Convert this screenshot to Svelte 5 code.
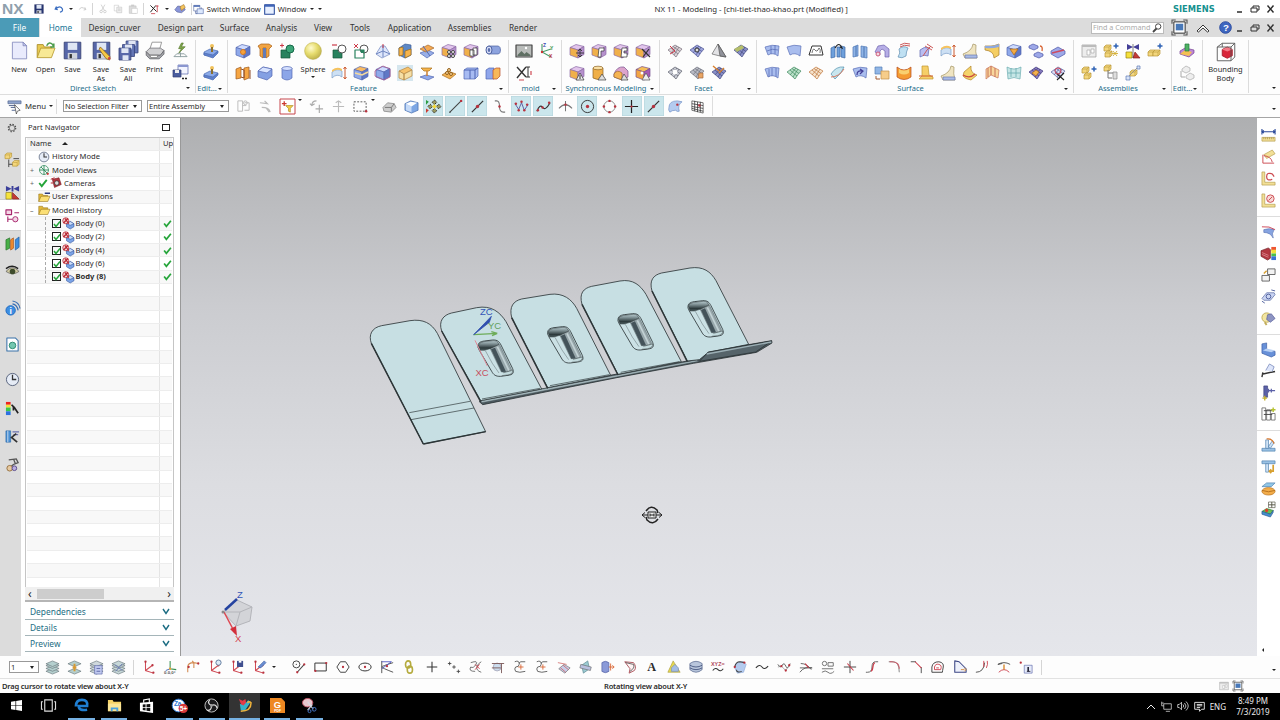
<script lang="ts">
	// small drawing helpers, every icon lives on a 16x16 grid
	const l = (d: string, c = '#444', w = 1) =>
		`<path d="${d}" fill="none" stroke="${c}" stroke-width="${w}"/>`;
	const f = (d: string, c: string, s = 'none', w = 0.7) =>
		`<path d="${d}" fill="${c}" stroke="${s}" stroke-width="${w}" stroke-linejoin="round"/>`;
	const dot = (x: number, y: number, c = '#b8323e', r = 1.3) =>
		`<circle cx="${x}" cy="${y}" r="${r}" fill="${c}"/>`;
	const ring = (x: number, y: number, r: number, c = '#444', fill = 'none') =>
		`<circle cx="${x}" cy="${y}" r="${r}" fill="${fill}" stroke="${c}"/>`;
	const cube = (t: string, a: string, b: string, s: string) =>
		f('M1 4.5l6-3 8 2-6 3.500z', t, s) + f('M1 4.500l8 2.500v8l-8-3z', a, s) + f('M15 3.500l-6 3.500v8l6-3.500z', b, s);
	const blueCube = cube('#cfdcff', '#8fa9ea', '#6078c6', '#5266b0');
	const purpleCube = cube('#e2c5ec', '#f0b04a', '#b590cc', '#8d6ba6');
	const sheet = (a: string, s: string) => f('M1 4q7-3 14-1l-1 10q-5-4-10-1z', a, s);
	const blueSheet = sheet('#a9bdee', '#5c70b8');
	const mesh = (a: string, s: string) =>
		f('M1 7l7-5 7 4q-3 3-6 8-4-4-8-7z', a, s) + l('M4 5l7 6M6 3.500l7 5M4 10l6-7M7 12l5-8', s, 0.7);
	const plus = (x: number, y: number, c = '#2e62b5') => l(`M${x - 2.5} ${y}h5M${x} ${y - 2.500}v5`, c, 1.5);
	const gold = (x: number, y: number) =>
		f(`M${x} ${y + 1}l2-2h5v4l-2 2h-5z`, '#f3d67c', '#b99738') + l(`M${x} ${y + 1}h5l2-2M${x + 5} ${y + 1}v4`, '#b99738', 0.6);
	const floppy = (c = '#5666a8') =>
		f('M1 1h14v14H1z', c, '#353f70') + f('M4 1.500h8v6H4z', '#dfe6f4') + f('M4 10h8v5H4z', '#cfd3dc') + f('M5.500 11h2v3.500h-2z', '#333');
	const axes = l('M4 2v10l9 3M4 12l8-6', '#d04c56', 1.2) + dot(4, 2) + dot(12, 6) + dot(13, 14.500);
	const ruler = f('M1 10h14v4H1z', '#f2df96', '#b39a4a') + l('M3 10v2M5 10v2M7 10v2M9 10v2M11 10v2M13 10v2', '#8e7730', 0.6);
	const layers = (c: string) =>
		f('M1 12l7-3 7 3-7 3z', c, '#69777c') + f('M1 9l7-3 7 3-7 3z', c, '#69777c') + f('M1 6l7-3 7 3-7 3z', c, '#69777c') + f('M1 4l7-3 7 3-7 3z', c, '#69777c');
	const txt = (s: string, x: number, y: number, c: string, z: number, extra = '') =>
		`<text x="${x}" y="${y}" fill="${c}" font-size="${z}" font-family="Liberation Sans, sans-serif" font-weight="bold" ${extra}>${s}</text>`;

	const art: Record<string, string> = {
		save: floppy('#26346f'),
		undo: l('M4 4L2 8l4 1M2.500 8q8-7 11 0 1 4-4 5', '#3a6dc0', 2),
		redo: l('M12 4l2 4-4 1M13.500 8q-8-7-11 0', '#c6c6c6', 1.5),
		cut: l('M5 1l5 9M11 1L6 10', '#bbb') + ring(5, 12, 2, '#bbb') + ring(11, 12, 2, '#bbb'),
		copy: f('M2 2h7v9H2z', '#fff', '#b5b5b5') + f('M6 5h8v9H6zM8 8h4M8 10h4', '#eee', '#b5b5b5'),
		paste: f('M2 3h11v12H2z', '#ddd', '#b5b5b5') + f('M6 7h9v8H6z', '#fff', '#bbb') + f('M5 1h5v3H5z', '#ccc'),
		repeat: l('M2 2l9 9M10 2L2 12', '#222', 1.4) + l('M12 2v10M10 3h4M3 14h6', '#c9414d', 1.2),
		command: f('M1 9l4-5 8 1 2 4-5 4-6-1z', '#8995d9', '#4b568e') + f('M8 5l5-3 2 4-5 4z', '#f4c45b', '#9a6a24'),
		switch: f('M1 2h9v8H1z', '#fff', '#334c93') + f('M1 2h9v2H1z', '#3a5daa') + f('M6 7h9v7H6z', '#dce8fd', '#334c93') + l('M4 10v4h2M12 5v2', '#334c93'),
		window: f('M1 1h14v14H1z', '#e8f0ff', '#26479a', 1.5) + f('M1 1h14v3H1z', '#3f65b8'),
		new: f('M2 1h9l3 3v11H2z', '#e9ebfc', '#8187bb') + f('M11 1v3h3z', '#c6caee', '#8187bb'),
		open: f('M1 14V3h5l1 2h6v3', '#e8c951', '#a78a25') + f('M1 14l3-8h12l-3 8z', '#f8e995', '#b59930') + l('M9 4q2-4 5-1l1 2M12 5h3V2', '#4c9c4d', 1.3),
		floppy: floppy(),
		saveas: floppy() + f('M6 7l1-2 8 8v3l-3-1z', '#f5c744', '#8f6420') + dot(14.500, 14.500, '#cc3c40', 1),
		saveall: f('M6 0h10v10H6z', '#6577b6', '#35427a') + f('M8 0h6v4H8z', '#e0e6f4') + f('M3 3h10v10H3z', '#6577b6', '#35427a') + f('M5 3h6v4H5z', '#e0e6f4') + f('M0 6h10v10H0z', '#5968a9', '#35427a') + f('M2 6h6v4H2zM3 12h5v4H3z', '#e0e6f4'),
		print: f('M4 7l2-6h8l-2 7z', '#fff', '#888') + f('M1 9l3-3h9l3 2-3 4H4z', '#d0d0d2', '#77777c') + f('M1 9v3l3 3h8l4-4V8l-3 4H4z', '#a4a5aa', '#66676c') + f('M4 12h7l-1 2H5z', '#fff', '#777'),
		sketch: f('M9 0L6 6h3L6 11l7-7H9l2-4z', '#7fa84a', '#55772d') + l('M1 14.500l3-3h8l3 3zM8 10v5', '#8d9ea0'),
		dialog: f('M5 1h10v9H5z', '#f3f5ff', '#5363a9') + f('M5 1h10v2H5z', '#8b97d0') + f('M0 6h8v7H0z', '#4a5d9e', '#303d72') + f('M2 6h4v3H2z', '#eee') + l('M9 14.500h2M12 14.500h2', '#222', 1.5),
		feat: f('M1 9l6-3 8 2-5 5-9-1z', '#8baae8', '#4b6cb2') + f('M1 10v2l9 3 5-5V8l-5 4z', '#5f80cc', '#4b6cb2') + dot(9, 3, '#f0c15b', 2) + l('M9 4v5', '#8c7030', 2),
		datum: blueCube + ring(8, 9, 2.500, '#d87a1e', '#f6a33d'),
		hole: f('M1 3l3-2h8l3 2-3 3v7l-3 2V5H6v10l-3-2V6z', '#f2a544', '#a65e17') + f('M6 5h3v10H6z', '#647bb5'),
		unite: f('M2 7h9v8H2z', '#28825e', '#14563b') + ring(11, 6, 4, '#17694a', '#3ba577') + l('M1 2.500h4M3 .5v4', '#cc3a48'),
		sphere: `<circle cx="8" cy="8" r="7.500" fill="url(#ball)" stroke="#b3a541" stroke-width=".4"/>`,
		block: f('M1 4l5-2v11l-5 1zM9 3l5-1v11l-5 2z', '#f6a643', '#9d5a1e') + l('M6 4l3 1v8l-3-1M15 5v9', '#8d4b28'),
		bluecube: f('M1 6l5-4 9 2v7l-5 4-9-3z', '#84a0e3', '#5166b1') + f('M1 6l5-4 9 2-5 4z', '#d9e4ff', '#5166b1'),
		cylinder: f('M3 3v10q5 4 10 0V3z', '#8ca6e8', '#5368b5') + `<ellipse cx="8" cy="3.500" rx="5" ry="2" fill="#d5e0ff" stroke="#5368b5" stroke-width=".7"/>`,
		subtract: f('M2 7h9v8H2z', '#28825e', '#14563b') + ring(11, 6, 4, '#555', '#fff') + l('M1 2h5', '#cc3a48', 1.2),
		intersect: f('M2 7h9v8H2z', '#fff', '#28825e', 1.2) + ring(11, 6, 4, '#555') + f('M7 7h4v3H8z', '#28825e') + l('M1 1l4 4M5 1L1 5', '#cc3a48', 1),
		draft: f('M1 11l6 4 8-4-5-8H6z', '#dfe7fb', '#6d84bf') + l('M8 2v12M1 11l7-3 7 3', '#6d84bf') + l('M8 1v4', '#cc3a48'),
		trim: f('M2 5l6-4 6 1v10l-6 3-6-3z', '#5d88c6', '#3c5d98') + f('M2 5l4-1v8l-4 1zM8 8l6-2v6l-6 3z', '#f6b44c', '#9a6b1a'),
		shell: f('M1 10l8-3 6 3-7 5z', '#98afe8', '#5369b3') + f('M1 6l8-4 6 3-8 4z', '#f4a953', '#a76827') + l('M4 3l7 10', '#5369b3'),
		pattern: purpleCube + ring(8, 9, 1.500, '#444', '#fff') + ring(12, 9, 1.500, '#444', '#fff') + ring(8, 13, 1.500, '#444', '#fff') + ring(12, 13, 1.500, '#444', '#fff'),
		patternface: purpleCube + f('M7 7h4v6H7zM10 5h4v7h-4z', '#fff', '#333'),
		tube: f('M3.500 3h10q2 1 2 4t-2 4h-10z', '#8da3de', '#4b5f9f') + `<ellipse cx="4" cy="7" rx="3" ry="4" fill="#d9e0fa" stroke="#4b5f9f"/><ellipse cx="4" cy="7" rx="1.300" ry="2" fill="#5b6fae"/>`,
		bendr: f('M1 7q5-4 10-1v6q-5-4-10 1z', '#cde0f4', '#7d9dc7') + f('M1 5q5-4 10-1v2q-5-3-10 1z', '#f6c35e') + l('M14 2v12M12.500 4L14 2l1.500 2M12.500 12l1.500 2 1.500-2', '#cc5a30'),
		blend: cube('#f9bb62', '#8fa9ea', '#6078c6', '#5266b0') + l('M2 8l7 2 6-3', '#f5d99a', 1.5),
		wrap: blueCube + l('M0 6l8-5 7 3v8l-6 3-9-4z', '#b05a90', 0.8),
		chamfer: f('M0 0h16v16H0z', '#d5e6ee') + f('M2 6l9-4 4 3-8 4z', '#f6c26c', '#b48540') + f('M2 6l5 3v6l-5-2zM7 9l8-4v6l-8 4z', '#f5dfa6', '#b48540'),
		thicken: f('M1 12l6-2 8 2-6 3z', '#8fa9ea', '#5266b0') + f('M2 3h11l-3 3H5z', '#f6b44c', '#a7701c') + l('M8 6v5', '#cc8030', 1.5),
		emboss: f('M1 10l6-4 8 3-6 5z', '#f2b252', '#a56c22') + ring(6, 8, 1.500, '#92601b', '#f8d69b') + ring(10, 9, 1.500, '#92601b', '#f8d69b') + ring(8, 5, 1.500, '#92601b', '#f8d69b'),
		sew: f('M1 5l3-2h11v8l-3 3H1z', '#a7bbf2', '#4f65b2') + l('M1 5h11l3-2M12 5v9M7 5v9', '#4f65b2'),
		split: f('M1 5l3-2h5v11H1z', '#8fa6eb', '#4f65b2') + f('M8 5l3-2h4v8l-3 3H8z', '#f8b85a', '#b84d2a'),
		picture: f('M0 2h16v12H0z', '#b9bcba', '#444', 1.2) + f('M1.500 12l4-4 3 3 2-2 4 3v1h-13z', '#5f6f63') + dot(10, 5, '#fff', 1.200),
		csys: l('M4 1v8l9 5M4 9l9-3', '#459b68', 1.1) + dot(4, 9, '#c33', 1.2) + txt('Z', 5, 4, '#3949b0', 5) + txt('Y', 12, 7, '#2d924b', 5) + txt('X', 11, 15, '#b34', 5),
		xform: l('M1 2l9 10M10 2L1 13', '#333', 1.4) + l('M12 2v10M10 2h4M10 12h4', '#333') + l('M3 15h5M15 6v4', '#d04c56', 1.2),
		move: purpleCube + l('M11 6v8M7 10h8M9 8l2-2 2 2M9 12l2 2 2-2', '#333', 0.9),
		pull: purpleCube + f('M8 5h5v3h-3v6H7z', '#fff', '#333'),
		offset: purpleCube + f('M9 5h5v3h-3v2h3v4H8z', '#fff', '#333'),
		replace: purpleCube + l('M7 6l8 8M14 6l-6 8', '#333', 1.2),
		tri: purpleCube + f('M11 8l4 7H7z', '#eee', '#333') + l('M11 10v4', '#333'),
		cyltri: f('M2 3v10q5 3 10 0V3z', '#f0af47', '#8e6323') + `<ellipse cx="7" cy="3" rx="5" ry="1.800" fill="#f9dfa4" stroke="#8e6323" stroke-width=".7"/>` + f('M11 9l4 6H7z', '#ddd', '#444'),
		wedgetri: f('M1 9q3-8 10-7l4 4v6l-6 3-8-3z', '#dca4cc', '#75508f') + f('M1 9q3-5 8-1v7l-8-3z', '#f5b452', '#9b6a26') + f('M11 9l4 6H8z', '#ddd', '#444'),
		resize: cube('#f6be58', '#f2a544', '#a65ab4', '#75508f') + f('M11 8l4 7H7z', '#eee', '#555') + dot(7, 8, '#fff', 1.5),
		facet1: mesh('#dcd3d8', '#77707b') + l('M3 3l5 5-5 3', '#cc3a48'),
		facet2: mesh('#9fa6dc', '#4e5594') + ring(8, 7, 2, '#333', '#ddd'),
		cone: f('M1 11L7 1l8 13-6-1z', '#e3e3e6', '#666') + f('M7 1l8 13-6-1z', '#90929a', '#555'),
		facet3: mesh('#898fc8', '#454a80') + f('M1 6l8-4 2 3-7 4z', '#b4be6a'),
		facet4: mesh('#c8cad4', '#60636e') + dot(8, 7, '#fff', 2.500),
		facet5: mesh('#b8bac4', '#70737e') + f('M10 8h4v5h-5z', '#e9a564', '#a56c40'),
		facet6: mesh('#898fc8', '#454a80') + l('M2 1l6 5M13 3L8 8', '#d88030', 1.4),
		s1: blueSheet + l('M3 8q5-3 11-1M7 3v8M11 2v9', '#5c70b8', 0.8),
		s2: blueSheet,
		s3: f('M1 12l3-9h9l2 9z', '#fff', '#333', 1) + l('M4 10q1-6 3-3t4-2q2 1 1 5', '#555', 0.8),
		s4: f('M1 5l4-2v11l-4 1zM7 4h3v10H7zM11 3l4 1v11l-4-1z', '#6ea0dc', '#3f69a4') + l('M5 5q4-7 7 0l-2-1', '#222', 1.2),
		s5: f('M1 4l5-2v11l-5 1zM9 3l6 1v11l-6-1z', '#8fb4e6', '#4a74b1') + l('M4 3v10M12 4v10', '#4a74b1'),
		s6: f('M1 9l3-6 6-1 5 4v8h-4V8L8 6 6 8v4z', '#b6aee6', '#6d62ae') + ring(4, 11, 2, '#cc5a7a', '#f2d9e2'),
		s7: f('M3 6q4-4 9-1-2 4-2 8-4 3-8 1 3-4 1-8z', '#bfe0f2', '#5d8cb0') + l('M4 4q4-3 10-1M4 2q4-3 10-1', '#cc5a5a'),
		s8: f('M2 7q4-4 9-2l-1 8q-4-2-8 1z', '#b9bdf0', '#5d64b0') + l('M7 3l7 4M9 1l6 4M5 13q4-7 8-10', '#cc5a5a'),
		s9: blueSheet + l('M5 4v8M8 3v8M12 3v9', '#5c70b8', 0.8),
		s10: mesh('#b9e0c8', '#418a60'),
		s11: mesh('#f5e3cd', '#c0773e'),
		s12: f('M1 9q5-8 13-7-2 6-9 12z', '#c8e6ef', '#4f8fae') + l('M1 12q8 0 13-8', '#d47a62'),
		s13: blueSheet + l('M5 10q0-5 5-4M8 4l3 2-3 3', '#433f97', 1.2),
		s14: f('M1 2h7v7H1z', '#91b6e6', '#557fb6') + f('M7 6h8v8H7z', '#f6cd8a', '#c09048') + l('M2 11v3h4', '#a35a30'),
		s15: f('M1 2q7 6 14 0v10q-7 5-14 0z', '#f59b32', '#b44a1c') + f('M3 4q5 3 10 0v4q-5 3-10 0z', '#f9d070'),
		s16: f('M4 1h6l1 9 4 2v2H1l3-3z', '#f6cf68', '#c0952f') + l('M1 11h14', '#cc5a30'),
		s17: f('M11 1q-1 7-10 10l2 4h12q-2-6-1-13z', '#f0e5c2', '#a39463') + f('M3 12h12v3H3z', '#a9bbe6', '#6b7db0'),
		s18: f('M2 7l7-6q-1 7 6 9l-6 5q-6-1-8-4z', '#f4d46a', '#b3852c') + l('M1 10q7 4 12-1', '#cc4a40', 1.2),
		s19: f('M1 3h6q3 0 8-2v11l-5 3q0-7-9-8z', '#f5ce62', '#a87d2b') + f('M1 3h6q3 0 8-2v3q-7 2-14 1z', '#8fa9dd'),
		s20: blueCube + f('M4 6h8l-4 6z', '#f5ab42', '#a86918'),
		s21: f('M1 3l4-2 5 2v2L6 7 1 5z', '#9da8e8', '#4e58a8') + f('M6 11l4-2 5 2v2l-4 2-5-2z', '#9da8e8', '#4e58a8') + l('M12 3q3 0 2 5', '#d86230', 1.3),
		s22: f('M1 8l7-4 7 4v3l-7 4-7-4z', '#9da8e8', '#4e58a8') + l('M2 10l12-3', '#cc4a60', 1.4),
		s23: f('M2 4l5-3v9l-5 4zM7 1l8 4-1 8-7-3z', '#f8d79c', '#c8735a') + l('M4 3v9M11 3v9', '#c8735a'),
		s24: f('M1 2q7 4 14 0l-1 12q-6-3-12 0z', '#c6e6e6', '#6aacb0') + l('M5 3v9M10 3v9M2 8h12', '#6aacb0', 0.8),
		s25: mesh('#877bc0', '#42397e') + f('M4 8l4-3 3 2-3 4z', '#f4b14c', '#ab6b1d'),
		s26: mesh('#dcdff5', '#565e9c') + l('M6 8l8 7M14 8l-7 7', '#222', 1.1) + ring(8, 6, 3, '#cc4a60'),
		asmload: f('M1 2h14v12H1z', '#ededed', '#999') + f('M1 2h14v2H1z', '#bbb') + f('M6 7h3v5H6zM10 6h3v4h-3z', '#fff', '#aaa'),
		asm1: gold(1, 3) + gold(2, 9) + plus(13, 3) + l('M10 8l4 5M14 8l-4 5M9 10.500h6', '#d3ae32', 0.9),
		asm2: f('M2 1l6 3 6-3v6L8 4 2 7z', '#433f97') + f('M1 9h6v6H1z', '#f4e03a', '#968010') + f('M8 15l2-6 5 6z', '#c43a34', '#8a2020') + l('M8 1v14', '#333', 0.6),
		asm3: gold(1, 8) + gold(6, 8) + plus(13, 3),
		asm4: gold(1, 3) + gold(3, 9) + plus(13, 4),
		asm5: gold(1, 1) + l('M5 5v8h4M5 8h7', '#777') + f('M10 7h4v7h-4z', '#ddd', '#888'),
		asm6: gold(5, 6) + f('M1 11h4v4H1zM12 1h3v3h-3z', '#d9e4f6', '#5c79b6') + l('M4 11l8-8', '#888', 0.8),
		edit1: f('M1 8l5-3 9 2v3l-5 4-9-3z', '#bd86d8', '#764292') + f('M6 7l7 2-3 4-9-2z', '#f3c052') + f('M6 1h4v7H6z', '#4eb264', '#267a3c'),
		edit2: f('M3 4l4-3 4 2v3l-4 2-4-2zM7 11l4-3 4 2v3l-4 2-4-2z', '#eee', '#aaa') + l('M2 6v6h4', '#aaa'),
		bounding: f('M5 6l4-2 4 2v5l-4 2-4-2z', '#d9263a', '#a81a2a') + f('M5 6l4-2 4 2-4 1.500z', '#f27a86') + l('M1 4h11v11H1zM1 4l4-3h10v11l-3 3M12 4l3-3M5 1v3', '#555', 0.7),
		menu: f('M1 2h14v3H1z', '#8ea3cb', '#4f628d') + l('M2 7h7M4 9h5M5 12h4', '#4f628d') + f('M8 6l6 6-3 1-1 3z', '#fff', '#333'),
		g1: l('M2 2h5v11H2zM9 4h5v8H9M7 7h4', '#bbb') + ring(10, 4, 2, '#bbb'),
		g2: l('M2 4l8 1-3-3M4 9q8 0 9 5M9 10l3 4', '#bbb', 1.3),
		filter: f('M0 0h16v16H0z', '#fff', '#c23a40', 1) + l('M2 5h5M4.500 2.500v5', '#cc3a30', 1.4) + f('M6 7h8l-3 3v4l-2-1v-3z', '#f3cf49', '#ab881f'),
		g3: l('M3 7q0-5 5-5M1 5l2 2 3-2M11 6v9M7 10.500h8', '#aaa', 1.2),
		g4: l('M8 2v12M2 8h12M5 4l3-2 3 2', '#bbb', 1.2),
		lasso: `<path d="M1 3h13v10H1z" fill="none" stroke="#555" stroke-dasharray="2 1.500"/>` + dot(14, 13),
		g5: f('M1 9l5-5 7 1 2 4-5 5-8-1z', '#ccc', '#777') + l('M3 9h7l3-4M10 9v4', '#777'),
		g6: f('M1 5l6-3 8 2v8l-7 3-7-3z', '#7ea7e4', '#3e66a8') + f('M2 5l6 3v6l-6-2z', '#c5daf8') + f('M2 5l5-2 7 1-6 4z', '#fff'),
		snap: f('M0 1l3 2-3 3z', '#2b9b3f') + f('M0 10l3 2-3 3z', '#cc3a30') + `<path d="M9 1l2.500 2.500L9 6 6.500 3.500zM9 10l2.500 2.500L9 15l-2.500-2.500zM4.500 5.500L7 8l-2.500 2.500L2 8zM13.500 5.500L16 8l-2.500 2.500L11 8z" fill="#9a9a60" stroke="#222" stroke-width="1" stroke-dasharray="1.500 .8"/>` + f('M9 5.500L11.500 8 9 10.500 6.500 8z', '#f4d93a'),
		line: l('M2 14L14 2', '#444', 1.1) + dot(14, 2) + dot(2, 14, '#444', 0.8),
		mid: l('M2 14L14 2', '#333', 1.3) + dot(8, 8, '#b8323e', 1.8),
		curve: l('M3 2h2q3 0 3 6t4 6h2', '#777', 1.1) + dot(8, 8),
		poly: l('M1 5l4 6 3-7 3 8 4-6', '#5a5aa0') + dot(2, 5) + dot(5, 12) + dot(8, 3) + dot(11, 12) + dot(14, 6),
		spline: l('M1 13q3-8 6-4t8-5', '#333', 1.2) + dot(2, 12) + dot(7, 9) + dot(14, 4),
		tan: l('M1 10q7-8 14 0M8 2v11', '#777', 1.1) + dot(8, 6),
		center: ring(8, 8, 6.500, '#333') + dot(8, 8, '#b8323e', 1.8),
		quad: ring(8, 8, 6, '#888') + dot(8, 2) + dot(8, 14) + dot(2, 8) + dot(14, 8),
		cross: l('M8 1v14M1 8h14', '#222', 1.3) + dot(8, 8, '#b8323e', 1.200),
		face: f('M1 9q0-7 9-7l5 1q-5 3-3 10-2 1-4-1-4 0-6 2-2-2-1-5z', '#b4cbef', '#6c8cc4') + dot(10, 6),
		grid: f('M2 2l12 2v11L2 12z', '#fff', '#333') + l('M2 5l12 2M2 8l12 2M2 10l12 3M5 2v11M8 3v11M11 3v11', '#333', 0.8) + dot(10, 7),
		layer: layers('#b4cfce'),
		layer2: f('M1 12l7-3 7 3-7 3z', '#b4cfce', '#69777c') + f('M1 4l7-3 7 3-7 3z', '#b4cfce', '#69777c') + l('M8 4v8M6 8h4', '#d99a30', 2),
		layer3: layers('#cfd8dc') + f('M6 6h8v9H6z', '#c2caf0', '#5d69a8') + l('M8 9h4M8 12h4', '#5d69a8'),
		layer4: layers('#c6d7d8') + l('M4 5l8 6M12 4l-7 8', '#6b7cb6'),
		axes,
		axes2: l('M7 1v9l7 1', '#399153', 1.2) + l('M7 10l-5 2', '#3a62b0') + dot(7, 10, '#f0a030') + txt('0.0,0°', 0, 16, '#555', 5),
		axes3: l('M2 14V8q0-5 7-5l5 1M9 3L7 1M9 3v6', '#d28a50', 1.2) + dot(14, 4) + dot(3, 8),
		axes4: axes + ring(12, 3, 3, '#567095', '#dcebf7'),
		axes5: axes + f('M8 1h7v7H8z', '#40508f') + f('M10 1h3v2h-3z', '#fff'),
		axes6: axes + f('M7 8l7-7 2 2-6 6z', '#6a8fd2', '#3c59a0'),
		profile: ring(5, 5, 4, '#333') + l('M6 14l8-9', '#444', 1.2) + dot(5, 5, '#666', 0.8) + dot(6, 14) + dot(14, 5),
		rect: l('M1 3.500h13v9H1z', '#333', 1.1) + dot(1.500, 12.500) + dot(14, 3.500),
		hex: l('M5 2h6l4 6-4 6H5L1 8z', '#333') + dot(8, 8),
		ellipse: `<ellipse cx="8" cy="8" rx="7" ry="4.500" fill="none" stroke="#333" stroke-width="1.100"/>` + dot(8, 8),
		conic: l('M2 1v14M15 3Q2 7 2 8t13 6', '#444') + l('M2 2h11L2 10', '#4d55c2') + dot(8, 7),
		chain: `<ellipse cx="7" cy="5" rx="3" ry="4" fill="none" stroke="#b5ab3e" stroke-width="1.800"/><ellipse cx="9" cy="11" rx="3" ry="4" fill="none" stroke="#b5ab3e" stroke-width="1.800"/>`,
		plus: l('M8 2v12M2 8h12', '#333', 1.2),
		points: l('M1 4h4M3 2v4M6 8h4M8 6v4M11 13h4M13 11v4', '#444'),
		c1: l('M2 3q9-3 6 2t-6 3q-3 5 5 5M14 2q-4 2-5 6t5 6', '#666') + l('M7 5l5 5M12 5L7 11', '#cc3a48'),
		c2: ring(7, 8, 4.500, '#aab', '#cde') + l('M1 4h14M1 9h10M12 4v11', '#755'),
		c3: l('M14 2H9Q7 2 7 5T3 8q-2 2 0 5 4 2 11 0M2 2q5-2 5 2', '#555') + l('M9 5v6M6 8h6', '#d86230'),
		c4: f('M2 10l6-5 7 4-6 6z', '#c8cde8', '#666') + l('M1 3l10 2M4 9l6 5M7 6l6 5', '#c55', 0.8),
		c5: f('M3 6l7-5 2 9-7 5z', '#9ccbd2', '#507f88') + f('M2 5l12 3-1 4L1 9z', '#b9c0df', '#666'),
		c6: f('M1 3q4-3 8 0v10q-4 3-8 0z', '#8a9ad8', '#4a579a') + l('M11 4v8M9 8h6M13 6l2 2-2 2', '#d86230'),
		c7: f('M2 2l10 1q4 5 1 9l-6 3 1-5z', '#fdf3f3', '#a74a52', 1) + l('M3 3l9 2q2 4-4 8', '#333', 0.8),
		c8: txt('A', 2.500, 13, '#2b2b2b', 14, 'style="font-family:Liberation Serif,serif"'),
		c9: f('M1 14L7 1l8 13z', '#e7d94d', '#a8993a') + f('M5 9l4-4 4 4v4H5z', '#a3bde5', '#7287b5'),
		c10: f('M1 4q7-5 14 0v7q-7 6-14 0z', '#b9c6dc', '#45557e') + l('M1 6q7 4 14 0M1 9q7 4 14 0', '#45557e'),
		c11: txt('XYZ=', 0, 7, '#b04a5a', 6.2) + l('M2 12q3-4 6-1t6-1', '#333', 1.2),
		c12: f('M2 9q0-8 10-7l3 3-3 9-7 1z', '#b4cbef', '#8ba6d4') + l('M2 8q1-6 6-6l5 1M4 11q0 4 6 2', '#444', 1.2) + dot(13, 3) + dot(2, 8),
		c13: l('M1 9q4-5 7-1t7-1', '#333', 1.2),
		c14: l('M1 5q3 5 5 1t4 1 5-3', '#555') + l('M1 8l4-1 5 5 4-6', '#888', 0.8) + dot(5, 7) + dot(10, 12) + dot(14, 6),
		c15: l('M1 14q5-7 14-5M2 4q7 0 12 7M1 9h14', '#555') + l('M7 4l4 5', '#cc3a48', 1.3),
		c16: ring(4, 4, 2.500, '#666') + l('M8 3h6v4H8zM1 10h13M1 14q4-3 7 0t7-1', '#666'),
		c17: l('M8 1v14M1 8h14', '#333') + l('M5 4l7 8', '#cc3a48', 1.2),
		c18: l('M15 2h-3q-4 0-4 6t-5 6H1', '#555') + l('M11 3q-2 2-2 5t-2 5', '#cc3a48', 1.5),
		c19: l('M2 2h5q7 0 7 12', '#777') + l('M3 2q11-1 11 8', '#cc5a68', 1.2),
		c20: l('M2 2h6M14 8v7', '#444') + l('M7 2l7 7', '#cc3a48', 1.2),
		c21: l('M1 14V8q1-6 8-6 6 1 5 6t-1 6z', '#333') + l('M4 11V8q1-4 5-3t2 6zM6 9h3', '#cc3a48'),
		c22: f('M2 1l5 1 8 8v4H2z', '#eef1fb', '#3b4684', 1.2) + l('M9 11h4M13 9l2 2-2 2', '#d88a30'),
		c23: l('M1 14q9 0 10-11', '#444') + l('M10 1v7M14 1q1 4-1 8', '#cc3a48'),
		c24: l('M1 5q7-4 14 0M1 5l5-1', '#444') + l('M2 14q6-6 12 0', '#cc3a48') + l('M8 5v6', '#d88a30', 1.6),
		c25: dot(2, 3) + f('M6 6h9v9H6z', '#e5eafa', '#5862a4') + l('M10.500 8v5', '#223', 1.8) + l('M9 13h4', '#223'),
		r1: l('M1 4h14M1 1v6M15 1v6M3 2.500L1 4l2 1.500M13 2.500L15 4l-2 1.500', '#2c4a9a', 1.2) + ruler,
		r2: f('M3 5l9-5 3 4-9 5z', '#f2df96', '#b39a4a') + l('M2 5v9h12M3 6q8 1 9 7', '#cc4a50'),
		r3: f('M1 1h3v11h11v3H1z', '#f2df96', '#b39a4a') + l('M12 3q-6-2-6 3t6 3M12 3l2 3', '#cc4a50', 1.3),
		r4: f('M1 1h3v11h11v3H1z', '#f2df96', '#b39a4a') + ring(10, 6, 4, '#cc4a50', '#f7d8d6') + l('M8 8l4-4', '#cc4a50'),
		r5: f('M3 6q6-2 11 0-3 4-1 9-3-6-10-6z', '#86a3e0', '#5b76b6') + l('M1 3q8-1 14 3', '#c45'),
		r6: f('M0 5l8-3 2 2v9l-3 2-7-4z', '#b23740', '#6b1a20') + l('M1 7l7 3M1 9l7 3', '#e6a0a6', 0.7) + f('M11 1h5v4h-5z', '#e53') + f('M11 4h5v4h-5z', '#f5e03a') + f('M11 8h5v3h-5z', '#4bbf4c') + f('M11 11h5v4h-5z', '#3973d4'),
		r7: f('M7 2h8v6H7zM1 9h8v6H1z', '#f3f3f3', '#555', 0.9) + l('M3 7l3-3', '#d8a030', 1.5),
		r8: f('M1 10l5-6h8l1 2-5 6H3z', '#cad4f2', '#50619e') + ring(8, 8, 2.500, '#50619e') + l('M11 1l4 1M1 13l3 2', '#50619e'),
		r9: ring(6, 7, 5, '#c1ac58', '#f3e6a0') + f('M7 4l4-1 4 5-5 4-4-3z', '#8d94c2', '#565c98') + l('M4 12l2 3', '#c1ac58', 2),
		r10: f('M1 2l5-1v8l9 1v4l-4 2-10-4z', '#6790d8', '#3a5ca4') + f('M6 7l9 2-4 2-9-2z', '#b9d1f5'),
		r11: l('M1 12l14-3M2 10l-1 5', '#333', 1.500) + f('M5 8l4-7 5 3-2 5', '#dde5fa', '#6476b0'),
		r12: f('M3 1h4v12H3z', '#5b61a8', '#3b407c') + l('M7 6h8M8 4v4M11 4v4', '#5b61a8', 1.3) + plus(4, 14, '#c6b230'),
		r13: f('M1 2h4v13H1zM6 4h4v11H6zM11 8h4v7h-4z', '#fff', '#444') + l('M3 5h9M3 9h9', '#444') + plus(13, 4, '#b6c230'),
		r14: f('M1 11h14v3H1z', '#9ac1e4', '#4d7fae') + f('M5 2h3v9H5zM8 9l4-6 2 2-4 6z', '#cfe2f5', '#4d7fae') + l('M6 1q6-1 8 5', '#d87a30', 1.3),
		r15: f('M1 2h14v3H1z', '#9ac1e4', '#4d7fae') + f('M5 5h3v9H5z', '#cfe2f5', '#4d7fae') + l('M13 6v7H9M11 11l-2 2 2 2', '#d8a030', 1.8),
		r16: f('M1 6l5-4h9l-4 4z', '#91c6e6', '#4d7fae') + `<ellipse cx="8" cy="11" rx="7" ry="4" fill="#f3ad4a" stroke="#b5701c" stroke-width=".700"/>` + l('M1 10q7 3 14 0', '#b5701c'),
		r17: f('M8 0h7v6H8z', '#fff', '#554') + l('M8 3h7M11.500 0v6', '#554') + f('M1 10l5-3 7 2-3 4z', '#6abf58', '#337a2a') + f('M1 10v3l9 3 3-5v-2l-3 4z', '#458fd0', '#2b5c90') + dot(6, 9, '#e5392d', 1.7),
		gear: ring(8, 8, 4.500, '#444') + `<circle cx="8" cy="8" r="6" fill="none" stroke="#444" stroke-width="1.800" stroke-dasharray="2.300 2.400"/>`,
		n1: gold(0, 1) + gold(8, 9) + l('M4 7v8M4 12h4M9 6h6', '#444'),
		n2: f('M1 1l6 3 0-3 2 0 0 3 6-3v6L9 4v3H7V4L1 7z', '#3b3f9a') + f('M1 8h6v7H1z', '#f6e33c', '#8f801a') + f('M8 15V8l7 7z', '#c43a34', '#8a2020'),
		n3: f('M1 2h6v5H1z', '#f4d6e6', '#a8286e', 1.2) + l('M3 9v6M3 12h5M10 5h5', '#a8286e', 1.2) + ring(11, 12, 2.800, '#a8286e', '#f4d6e6'),
		n4: f('M1 4l4-2v11l-4 2z', '#48b048', '#256d26') + f('M6 4l3-2v11l-3 2z', '#f08c30', '#a85010') + f('M11 4l4-3v11l-4 3z', '#3d8ee2', '#1b5aa0'),
		n5: f('M1 9q7-8 14 0-7 5-14 0z', '#cfc9a2', '#555') + dot(8, 9, '#3d4b2b', 3) + l('M1 6q7-5 13 0', '#222', 1.5),
		n6: ring(6, 10, 5, '#1f6ac0', '#3d8ee2') + txt('i', 4.800, 13.500, '#fff', 9) + l('M8 3q5 1 6 7M8 0q7 1 8 8', '#3b6fb4', 1.3),
		n7: f('M2 1h9l3 3v11H2z', '#fff', '#3971a8', 1.1) + ring(8, 9, 3.500, '#2c8a70', '#74c7b0'),
		clock: ring(8, 8, 6.500, '#55617b', '#e6ecf6') + l('M8 3v5h4', '#333', 1.4),
		n8: f('M1 1h5v3H1z', '#e22') + f('M1 4h5v3H1z', '#f5e03a') + f('M1 7h5v4H1z', '#3ac84c') + f('M1 11h5v4H1z', '#2d70e0') + l('M7 4l3 3 4 6M9 6v4', '#222', 1.8),
		n9: f('M1 2h5v12H1z', '#4a90d4', '#2b68a8') + l('M3 2v12', '#cde') + l('M8 3h7M9 6h5', '#6a70b0', 1.3) + l('M12 5L7 9l6 5', '#333', 1.8),
		n10: l('M4 3l8-1 2 4-5 2-5 4M9 2l2 5', '#555', 1.4) + ring(5, 12, 3, '#957040', '#e6c9a0') + ring(10, 12, 2.500, '#5a4a8a', '#b9aee2'),
		views: ring(8, 8, 6, '#2b8a5a') + l('M8 2v12M2 8h12M4 4l8 8', '#2b8a5a', 1.2) + dot(13, 13, '#c33', 1.5),
		camera: f('M3 3l9-2 3 9-9 4z', '#b4343e', '#6b1218') + ring(9, 8, 3, '#333', '#ddd') + l('M1 3l5-2M1 8h3', '#b4242e', 1.3),
		folder: f('M1 14V3h5l1 2h6v3', '#e3b93a', '#8d6b16') + f('M1 14l3-7h12l-3 7z', '#fbdf75', '#8d6b16'),
		folderx: f('M1 14V4h5l1 2h6v3', '#e3b93a', '#8d6b16') + f('M1 14l3-7h12l-3 7z', '#fbdf75', '#8d6b16') + l('M9 3h7', '#2b3a80', 2),
		body: f('M6 9l5-3 5 3v4l-5 3-5-3z', '#7ba3e6', '#2b4a94') + f('M6 9l5-3 5 3-5 2z', '#cfe0fa', '#2b4a94') + ring(5, 5, 4, '#b8202c', '#f0d0d0') + l('M2 8l6-6M4 2l5 7', '#b8202c', 1.5),
		check: l('M2 8l4 5 8-10', '#25a53a', 3),
		help: ring(8, 8, 7.200, '#26459a', '#3e66bf') + txt('?', 4.800, 12.500, '#fff', 12),
		full: l('M0 4V0h4M12 0h4v4M16 12v4h-4M4 16H0v-4', '#555', 1.2) + f('M2 2h12v12H2z', '#fff', '#222', 1) + f('M4 4h8v7H4z', '#4878b8'),
		start: f('M0 2.500l6.500-1V7.500H0zM7.500 1.300L16 0v7.500H7.500zM0 8.500h6.500v6L0 13.500zM7.500 8.500H16V16l-8.500-1.300z', '#fff'),
		task: l('M4 2h8v12H4zM2 4H.500v8H2M14 4h1.500v8H14', '#ddd', 1.2),
		edge: l('M2 9Q2 2 8.500 2T14 8.500H5Q5 14 14 12.500', '#1f7ed2', 2.800),
		explorer: f('M1 2h5l1 2h8v10H1z', '#f6d366') + f('M1 6h14v8H1z', '#fbe596') + f('M4 10h8v4h-2v-2H6v2H4z', '#4aa2e0'),
		store: f('M1 5l14-1v12L1 14z', '#fff') + l('M5 5V2l6-1v4', '#fff', 1.2) + f('M4 7l3-.300v2.800H4zM8 6.600l4-.300v3.200H8zM4 10.500h3v2.800l-3-.400zM8 10.500h4v3.500l-4-.500z', '#111'),
		zalo: ring(7, 8, 6.800, '#2a78d4', '#fff') + txt('Za', 2, 8, '#2a78d4', 7) + `<circle cx="12" cy="11" r="5" fill="#d93a3a"/>` + txt('5+', 8.200, 13.800, '#fff', 7),
		obs: ring(8, 8, 7, '#c8c8c8', '#1a1a1c') + l('M8 8q-5-2-2-6M8 8q5-2 6 3M8 8q0 6-5 5', '#ddd', 1.3) + dot(8, 8, '#999', 1.500),
		nx: f('M2 1l4 2 3-2 1 6-4 4z', '#e23a48') + f('M3 6l4 2 5-6 2 3-6 9-4-1z', '#36b2c8') + l('M4 14q11 0 11-9-2-2-4 0', '#f0b33a', 1.6),
		gbox: f('M0 0h12l4 4v12H0z', '#ee8822') + txt('G', 4, 11, '#fff', 10) + txt('PDF', 4.500, 15, '#fff', 3.600),
		snip: `<ellipse cx="6" cy="5" rx="5.500" ry="4.500" fill="#e7c8ce" stroke="#c25466"/>` + l('M6 4l6 8M11 7l-5 6', '#d8dbe5', 1.3) + ring(13, 12, 2, '#4878c8') + ring(8, 14, 1.600, '#4878c8'),
		net: l('M4 4h11v8H4zM7 15h6M1 1v6h3M1 3h3', '#ddd', 1.1),
		vol: l('M1 6h2l3-3v10l-3-3H1zM8 6q2 2 0 4M10 4q4 4 0 8M12 2q6 6 0 12', '#ddd', 1.100),
		note: l('M1 2h14v10h-4l-3 3v-3H1zM4 5h8M4 7h8M4 9.500h5', '#eee', 1.300)
	};

	const tabs = [
		['Home', 41, true], ['Design_cuver', 67], ['Design part', 65], ['Surface', 43], ['Analysis', 51],
		['View', 32], ['Tools', 42], ['Application', 57], ['Assemblies', 63], ['Render', 44]
	] as [string, number, boolean?][];

	const files = [
		['new', 'New', 26], ['open', 'Open', 27], ['floppy', 'Save', 27], ['saveas', 'Save As', 30],
		['saveall', 'Save All', 24], ['print', 'Print', 29]
	] as [string, string, number][];

	// icons run down each column: top, bottom, top, bottom ...
	const groups = [
		{ label: 'Edit...', w: 32, icons: 'feat feat' },
		{ label: 'Feature', w: 281, icons: 'datum block hole bluecube unite cylinder SPHERE subtract bendr intersect blend draft wrap trim chamfer shell thicken pattern emboss patternface sew tube split' },
		{ label: 'mold', w: 53, icons: 'picture xform csys' },
		{ label: 'Synchronous Modeling', w: 98, icons: 'move tri pull cyltri offset wedgetri replace resize' },
		{ label: 'Facet', w: 97, icons: 'facet1 facet4 facet2 facet5 cone facet6 facet3' },
		{ label: 'Surface', w: 317, icons: 's1 s9 s2 s10 s3 s11 s4 s12 s5 s13 s6 s14 s7 s15 s8 s16 bendr s17 s17 s18 s19 s23 s20 s24 s21 s25 s22 s26' },
		{ label: 'Assemblies', w: 98, icons: 'asmload asm4 asm1 asm5 asm2 asm6 asm3' },
		{ label: 'Edit...', w: 31, icons: 'edit1 edit2' }
	].map((g) => ({ ...g, icons: g.icons.split(' ') }));

	const picks = 'g1 g2 filter ^ g3 g4 lasso ^ g5 g6 *snap *line *mid curve *poly *spline tan *center quad *cross *mid face grid'.split(' ');
	const curves = 'profile rect hex ellipse conic chain plus points c1 c2 c3 c3 c4 c5 c6 c7 c8 c9 c10 c11 c12 c13 c14 c15 c16 c17 c18 c19 c20 c21 c22 c23 c24 c25'.split(' ');
	const resources = [
		['gear', 19], ['n1', 47], ['n2', 16], ['n3', 30, true], ['n4', 26], ['n5', 29],
		['n6', 46], ['n7', 26], ['clock', 44], ['n8', 14], ['n9', 42], ['n10', 14]
	] as [string, number, boolean?][];
	const analysis = ['r1 r2 r3 r4', 'r5 r6 r7 r8 r9', 'r10 r11 r12 r13', 'r14 r15 r16 r17'].map((s) => s.split(' '));

	const rows = [
		{ icon: 'clock', text: 'History Mode' },
		{ icon: 'views', text: 'Model Views', sign: '+' },
		{ icon: 'camera', text: 'Cameras', sign: '+', check: true },
		{ icon: 'folderx', text: 'User Expressions' },
		{ icon: 'folder', text: 'Model History', sign: '–' },
		...[0, 2, 4, 6, 8].map((n) => ({ icon: 'body', text: `Body (${n})`, body: true, bold: n === 8 })),
		...Array(23).fill({})
	] as { icon?: string; text?: string; sign?: string; check?: boolean; body?: boolean; bold?: boolean }[];

	const apps = [
		['start', ''], ['task', ''], ['edge', 'run'], ['explorer', 'run'], ['store', ''], ['zalo', 'run'],
		['obs', 'run'], ['nx', 'run active'], ['gbox', 'run'], ['snip', 'run']
	];

	const pockets = [[-630, 118], [-421, 78], [-210, 39], [0, 0]];
	const plates = [
		'M34 265C25 240 35 218 65 212L150 197C190 191 215 205 232 235L377 530L190 567Z',
		'M245 228C235 198 250 180 275 174L350 158C395 150 420 172 438 200L545 402L362 437Z',
		'M455 188C447 155 460 138 485 132L570 118C610 113 635 133 650 160L752 361L563 398Z',
		'M666 148C657 115 670 100 695 94L780 78C820 71 842 92 858 118L964 320L774 358Z',
		'M876 108C867 76 880 60 905 54L990 39C1030 33 1052 50 1068 77L1166 268L1045 292L1018 314L982 318Z'
	];
	const edges = ['M34 265L190 567', 'M245 228L362 440', 'M455 188L563 400', 'M666 148L774 360', 'M876 108L982 320'];
</script>

{#snippet icon(name: string, size = 17)}
	<svg class="icon" width={size} height={size} viewBox="0 0 16 16">{@html art[name]}</svg>
{/snippet}

{#snippet winButtons()}
	<svg class="win" width="46" height="12" viewBox="0 0 46 12" fill="none" stroke="currentColor">
		<path d="M3 9h5" stroke-width="1.5" />
		<path d="M17 5h6v4h-6zM19 5V3h6v4h-2" />
		<path d="M33.500 2.500l6 7M39.500 2.500l-6 7" stroke-width="1.400" />
	</svg>
{/snippet}

<svg class="defs" width="0" height="0">
	<defs>
		<radialGradient id="ball" cx=".38" cy=".32" r=".75">
			<stop offset="0" stop-color="#fffbd0" />
			<stop offset=".5" stop-color="#e6dc6e" />
			<stop offset="1" stop-color="#b9ac47" />
		</radialGradient>
	</defs>
</svg>

<div class="app">
	<header class="title">
		<span class="nx">NX</span>
		<div class="quick">
			{@render icon('save', 10)}
			<span class="gap"></span>
			{@render icon('undo', 10)}
			<i class="caret"></i>
			{@render icon('redo', 9)}
			<i class="bar"></i>
			{@render icon('cut', 10)}
			{@render icon('copy', 10)}
			{@render icon('paste', 10)}
			<i class="bar"></i>
			{@render icon('repeat', 11)}
			<i class="caret"></i>
			{@render icon('command', 12)}
			<i class="bar"></i>
		</div>
		<div class="wins">
			{@render icon('switch', 11)}<span>Switch Window</span>
			{@render icon('window', 11)}<span>Window</span><i class="caret"></i><i class="caret over"></i>
		</div>
		<span class="doc">NX 11 - Modeling - [chi-tiet-thao-khao.prt (Modified) ]</span>
		<span class="siemens">SIEMENS</span>
		{@render winButtons()}
	</header>

	<nav class="tabs">
		<span class="file">File</span>
		{#each tabs as [name, width, active]}
			<span class="tab" class:active style="width:{width}px">{name}</span>
		{/each}
		<div class="find"><span>Find a Command</span>
			<svg width="10" height="10" viewBox="0 0 10 10" fill="none" stroke="#444"><circle cx="6.200" cy="3.500" r="2.700" /><path d="M4.500 5.500L1 9" stroke-width="1.800" /></svg>
		</div>
		<div class="tools">
			{@render icon('full', 15)}
			<svg width="14" height="10" viewBox="0 0 14 10"><path d="M1 8l6-6 6 6-1.500 1L7 5 2.500 9z" fill="#fff" stroke="#333" /></svg>
			{@render icon('help', 13)}
		</div>
		{@render winButtons()}
	</nav>

	<section class="ribbon">
		<div class="group first">
			<div class="big-row">
				{#each files as [art, label, width]}
					<div class="big" style="width:{width}px">{@render icon(art, 19)}<span>{label}</span></div>
				{/each}
				<div class="stack">{@render icon('sketch', 15)}{@render icon('dialog', 16)}</div>
			</div>
			<footer><span>Direct Sketch</span><i class="caret"></i></footer>
		</div>
		{#each groups as g}
			<div class="group" style="width:{g.w}px">
				<div class="cells">
					{#each g.icons as name}
						{#if name === 'SPHERE'}
							<div class="sphere">{@render icon('sphere', 18)}<span>Sphere</span><i class="caret"></i></div>
						{:else}
							<div class="cell">{@render icon(name, 16)}</div>
						{/if}
					{/each}
				</div>
				<footer><span>{g.label}</span><i class="caret"></i></footer>
			</div>
		{/each}
		<div class="group bounding">
			{@render icon('bounding', 20)}
			<span>Bounding Body</span>
		</div>
		<div class="rest"><i class="caret"></i></div>
	</section>

	<section class="selection">
		<div class="menu">{@render icon('menu', 15)}<span>Menu</span><i class="caret"></i></div>
		<div class="select wide">No Selection Filter<i class="caret big-caret"></i></div>
		<div class="select entire">Entire Assembly<i class="caret big-caret"></i></div>
		<div class="picks">
			{#each picks as name}
				{#if name === '^'}
					<div class="drop"><i class="caret"></i></div>
				{:else}
					<div class="pick" class:on={name[0] === '*'}>{@render icon(name.replace('*', ''), 15)}</div>
				{/if}
			{/each}
		</div>
		<i class="caret end"></i>
	</section>

	<main>
		<aside class="resource">
			{#each resources as [name, height, active]}
				<div class:active style="height:{height}px">{@render icon(name, name === 'gear' ? 10 : 15)}</div>
			{/each}
		</aside>

		<aside class="navigator">
			<h2>Part Navigator<i></i></h2>
			<div class="tree">
				<div class="row head"><span class="name">Name<i class="up"></i></span><span class="state">Up</span></div>
				{#each rows as r, n}
					<div class="row" class:odd={n % 2 === 1}>
						<div class="name" class:child={r.body}>
							{#if r.icon}
								<span class="sign">{r.sign ?? ''}</span>
								{#if r.check}{@render icon('check', 10)}{/if}
								{#if r.body}<span class="box">{@render icon('check', 8)}</span>{/if}
								{@render icon(r.icon, 12)}
								<span class="text" class:bold={r.bold}>{r.text}</span>
							{/if}
						</div>
						<div class="state">{#if r.body}{@render icon('check', 9)}{/if}</div>
					</div>
				{/each}
			</div>
			<div class="scroll"><span>‹</span><i></i><span>›</span></div>
			{#each ['Dependencies', 'Details', 'Preview'] as name}
				<div class="fold">{name}<svg width="8" height="7" viewBox="0 0 8 7"><path d="M1 1l3 4.500L7 1" fill="none" stroke="#1d6d83" stroke-width="1.400" /></svg></div>
			{/each}
		</aside>

		<svg class="scene" width="1076" height="538" viewBox="181 118 1076 538">
			<defs>
				<linearGradient id="top" x1="0" y1="0" x2="0" y2="1">
					<stop offset="0" stop-color="#b8cbcf" /><stop offset=".35" stop-color="#7c8d91" /><stop offset=".75" stop-color="#2c393b" /><stop offset="1" stop-color="#4f6164" />
				</linearGradient>
			</defs>
			<g transform="translate(360 255) scale(.33333)" stroke="#2c3537" stroke-width="2.500" stroke-linejoin="round">
				<path d="M358 440L545 402L750 361L982 318L1030 302L1045 290L1235 257L1236 264L1190 292L1000 325L770 368L600 402L368 449Z" fill="#4d5a60" />
				<path d="M362 437L1010 315L1016 319L366 443Z" fill="#a5b8bd" stroke-width="1" />
				{#each plates as d}<path {d} fill="#c7dfe3" />{/each}
				{#each edges as d}<path {d} fill="none" stroke-width="4.500" />{/each}
				<path d="M190 567L377 530" stroke-width="4" />
				<path d="M148 473L330 439M153 494L342 459" stroke-width="2" />
				<path d="M366 432L540 400M570 392L748 359M782 352L958 320" stroke-width="2" />
				<path d="M1045 291L1235 258L1187 291L1018 319Z" fill="#56646a" />
				<path d="M1040 297L1234 261" stroke="#9cafb5" stroke-width="4" />
				{#each pockets as [x, y]}
					<g transform="translate({x} {y})">
						<path d="M984 159C983 145 990 142 1003 140L1028 137C1043 136 1048 143 1053 152L1088 223C1093 237 1088 241 1074 243L1052 246C1036 247 1030 240 1025 231L988 168Z" fill="#cbe1e5" />
						<path d="M1006 169L1027 207L1047 236" fill="none" stroke="#5d6c70" stroke-width="1.500" />
						<path d="M1020 162L1048 150L1085 226L1072 234L1054 233Z" fill="#97a6aa" stroke-width="1" />
						<path d="M1023 165L1035 160L1068 232L1055 233Z" fill="#44535a" stroke="none" />
						<path d="M1042 157L1077 229" stroke="#c3d2d5" stroke-width="5" />
						<path d="M985 153Q987 144 1001 142L1030 139Q1042 138 1047 150L1020 163L1003 168L990 168Z" fill="url(#top)" stroke-width="1.500" />
						<path d="M1060 235L1088 228Q1090 239 1073 242L1056 244" fill="#c3dadd" stroke-width="1.500" />
					</g>
				{/each}
				<path d="M341 239L412 235M412 235l-18-5M412 235l-16 7" stroke="#6dac58" stroke-width="4" />
				<path d="M341 239L394 184L388 202Z" fill="#304fae" stroke="#304fae" />
				<path d="M345 256L382 333" stroke="#e08a98" stroke-width="3" />
			</g>
			<g class="axis">
				<text x="480" y="315" fill="#3355b8">ZC</text>
				<text x="488" y="329" fill="#63a05c">YC</text>
				<text x="475.500" y="376" fill="#c6505e">XC</text>
				<text x="237" y="598" fill="#3355b8">Z</text>
				<text x="235" y="642" fill="#d43d4c">X</text>
			</g>
			<path d="M223 612l14-12 15 7-2 14-14 5z" fill="#d3d4d8" stroke="#b4b5ba" />
			<path d="M223 612l17 0 12-5M240 612l-4 14" fill="none" stroke="#b4b5ba" />
			<path d="M225 610l12-11" stroke="#2543a0" stroke-width="2.500" />
			<path d="M224 612l11 21" stroke="#df4650" stroke-width="1.500" /><path d="M230 629l7 7-1-10z" fill="#d22f3b" />
			<circle cx="223" cy="612" r="1.500" fill="#888" />
			<g fill="none" stroke="#222">
				<path d="M646 511q5-7 11-1l1 3M658 519q-5 7-11 1l-1-3" stroke-width="1.500" />
				<path d="M642 515h20M645 512.500l-3 2.500 3 2.500M659 512.500l3 2.500-3 2.500" />
				<path d="M648 512h8v6h-8z" fill="#eee" />
				<path d="M650 513.500v3M654 513.500v3M650 515h4" />
			</g>
		</svg>

		<aside class="analysis">
			{#each analysis as set}
				<div class="set">{#each set as name}<div>{@render icon(name, 15)}</div>{/each}</div>
			{/each}
			<span class="back"></span>
		</aside>
	</main>

	<section class="curvebar">
		<div class="select layer">1<i class="caret big-caret"></i></div>
		{#each ['layer', 'layer2', 'layer3', 'layer4'] as name}<div class="pick">{@render icon(name, 15)}</div>{/each}
		<i class="bar"></i>
		{#each ['axes', 'axes2', 'axes3', 'axes4', 'axes5', 'axes6'] as name}<div class="pick">{@render icon(name, 14)}</div>{/each}
		<i class="caret"></i>
		<div class="picks curves">
			{#each curves as name}<div class="pick">{@render icon(name, 14)}</div>{/each}
		</div>
		<i class="bar"></i>
		<i class="caret end"></i>
	</section>

	<section class="status">
		<span>Drag cursor to rotate view about X-Y</span>
		<span>Rotating view about X-Y</span>
		<div>{@render icon('asmload', 10)}{@render icon('full', 10)}</div>
	</section>

	<footer class="taskbar">
		{#each apps as [name, state]}
			<div class="task {state}">{@render icon(name, name === 'start' ? 11 : 15)}</div>
		{/each}
		<div class="tray">
			<svg width="10" height="7" viewBox="0 0 10 7"><path d="M1 6l4-4 4 4" fill="none" stroke="#eee" /></svg>
			{@render icon('net', 11)}
			{@render icon('vol', 12)}
			{@render icon('note', 11)}
			<span>ENG</span>
			<div class="time"><span>8:49 PM</span><span>7/3/2019</span></div>
		</div>
	</footer>
</div>

<style>
	:global(body) {
		margin: 0;
		overflow: hidden;
	}

	.app {
		display: flex;
		flex-direction: column;
		width: 1280px;
		height: 720px;
		background: #fdfdfd;
		font-family: 'Noto Sans', 'Open Sans', sans-serif;
		font-size: 7.5px;
		line-height: 9px;
		color: #2b2b2b;
		white-space: nowrap;
		overflow: hidden;
	}

	.app :global(svg) {
		display: block;
		flex: none;
	}

	.icon {
		overflow: visible;
	}

	.defs {
		position: absolute;
	}

	.caret {
		flex: none;
		width: 0;
		height: 0;
		border: 2px solid transparent;
		border-top: 2.5px solid #222;
		border-bottom: 0;
	}

	.big-caret {
		border-width: 3px 2.5px 0;
	}

	.bar {
		flex: none;
		width: 1px;
		height: 15px;
		background: #d5d5d5;
	}

	.title {
		display: flex;
		align-items: center;
		height: 18px;
		flex: none;
		background: #fff;
	}

	.nx {
		width: 32px;
		padding-left: 2px;
		font: bold 15.5px 'Liberation Sans', sans-serif;
		color: #8fa0ac;
		box-sizing: border-box;
	}

	.quick {
		display: flex;
		align-items: center;
		justify-content: space-between;
		width: 160px;
		padding-left: 2px;
		box-sizing: border-box;
	}

	.quick .gap {
		width: 0;
	}

	.quick .bar {
		height: 12px;
	}

	.wins {
		display: flex;
		align-items: center;
		gap: 3px;
		width: 465px;
		padding-left: 1px;
		box-sizing: border-box;
	}

	.wins span {
		font-size: 7.6px;
	}

	.over {
		margin-left: 1px;
		box-shadow: 0 -3px 0 -1px #222;
	}

	.doc {
		width: 519px;
		margin-left: -2px;
		font-size: 7.8px;
	}

	.siemens {
		width: 61px;
		font: bold 8.3px 'DejaVu Sans', sans-serif;
		color: #16918f;
	}

	.tabs {
		display: flex;
		align-items: center;
		flex: none;
		height: 19px;
		background: #dcdcdc;
		font-size: 8.3px;
		color: #333;
	}

	.file {
		align-self: stretch;
		flex: none;
		width: 39px;
		margin-right: 1px;
		line-height: 19px;
		text-align: center;
		background: #4b9bb7;
		color: #fff;
	}

	.tab {
		flex: none;
		line-height: 19px;
		text-align: center;
	}

	.tab.active {
		background: #fff;
		color: #177596;
	}

	.find {
		display: flex;
		align-items: center;
		justify-content: space-between;
		width: 73px;
		height: 12px;
		margin-left: auto;
		padding: 0 1px;
		box-sizing: border-box;
		border: 1px solid #bbb;
		background: #fff;
		font-size: 7.2px;
		color: #aaa;
	}

	.tools {
		display: flex;
		align-items: center;
		gap: 9px;
		width: 70px;
		padding-left: 8px;
		box-sizing: border-box;
	}

	.ribbon {
		display: flex;
		flex: none;
		height: 58px;
		box-sizing: border-box;
		padding: 3px 0 1px;
		border-bottom: 1px solid #ddd;
	}

	.group {
		display: flex;
		flex-direction: column;
		flex: none;
		box-sizing: border-box;
		border-right: 1px solid #dcdcdc;
	}

	.first {
		width: 196px;
	}

	.group footer {
		display: flex;
		align-items: center;
		justify-content: space-between;
		height: 11px;
		padding-right: 5px;
		color: #1d6d8a;
	}

	.group footer span {
		flex: 1;
		text-align: center;
	}

	.big-row {
		display: flex;
		height: 44px;
		padding-left: 6px;
	}

	.big {
		display: flex;
		flex-direction: column;
		align-items: center;
		gap: 5px;
		padding-top: 1px;
		text-align: center;
	}

	.big span {
		width: 22px;
		line-height: 9px;
		white-space: normal;
	}

	.stack {
		display: flex;
		flex-direction: column;
		gap: 6px;
		padding: 3px 0 0 4px;
	}

	.cells {
		display: grid;
		grid-auto-flow: column;
		grid-template-rows: 22px 22px;
		grid-auto-columns: max-content;
		height: 44px;
		padding-left: 4px;
	}

	.cell {
		display: grid;
		place-items: center;
		width: 22px;
	}

	.sphere {
		grid-row: span 2;
		width: 30px;
		display: flex;
		flex-direction: column;
		align-items: center;
		padding-top: 2px;
	}

	.sphere span {
		margin: 5px 0 2px;
	}

	.bounding {
		width: 46px;
		align-items: center;
		padding: 2px 4px 0;
		text-align: center;
		white-space: normal;
		gap: 3px;
	}

	.rest {
		display: flex;
		flex: 1;
		align-items: flex-end;
		justify-content: flex-end;
		padding: 0 4px 4px 0;
	}

	.selection {
		display: flex;
		align-items: center;
		flex: none;
		height: 22px;
		border-bottom: 1px solid #a5a5a5;
	}

	.menu {
		display: flex;
		align-items: center;
		gap: 3px;
		width: 57px;
		height: 15px;
		margin-right: 6px;
		padding-left: 7px;
		box-sizing: border-box;
		border-right: 1px solid #ddd;
		font-size: 7.8px;
	}

	.select {
		display: flex;
		align-items: center;
		justify-content: space-between;
		flex: none;
		height: 12px;
		padding: 0 4px 0 1px;
		box-sizing: border-box;
		border: 1px solid #999;
		background: #fff;
	}

	.wide {
		width: 79px;
		margin-right: 5px;
	}

	.entire {
		width: 82px;
		margin-right: 3px;
	}

	.picks {
		display: flex;
		align-items: center;
		height: 20px;
		padding-right: 3px;
		border-right: 1px solid #ddd;
	}

	.pick {
		display: grid;
		place-items: center;
		flex: none;
		width: 20px;
		height: 20px;
		margin: 0 1.03px;
	}

	.on {
		background: #cbe6ec;
		box-shadow: inset 0 0 0 0.5px #b2d2da;
	}

	.drop {
		width: 7px;
	}

	.end {
		margin: 6px 4px 0 auto;
	}

	main {
		display: flex;
		flex: none;
		height: 538px;
	}

	.resource {
		width: 21px;
		flex: none;
		background: #dcdcdc;
	}

	.resource div {
		display: flex;
		align-items: center;
		justify-content: center;
		padding-left: 3px;
		width: 18px;
	}

	.resource .active {
		background: #fff;
		box-shadow: 0 0 0 0.5px #bbb;
	}

	.navigator {
		display: flex;
		flex-direction: column;
		width: 160px;
		flex: none;
		padding: 0 6px 0 4px;
		box-sizing: border-box;
		border-right: 1px solid #999;
		background: #fff;
	}

	.navigator h2 {
		display: flex;
		align-items: center;
		justify-content: space-between;
		height: 19px;
		margin: 0;
		padding: 0 4px 0 3px;
		font-size: 7.6px;
		font-weight: normal;
	}

	.navigator h2 i {
		width: 6px;
		height: 5px;
		border: 1px solid #222;
	}

	.tree {
		height: 450px;
		padding: 0 1px;
		border: 1px solid #c5c5c5;
		border-bottom: 0;
		box-sizing: border-box;
		overflow: hidden;
		font-size: 7.6px;
	}

	.row {
		display: flex;
		height: 13.35px;
		box-sizing: border-box;
		border-bottom: 1px solid #ededed;
	}

	.row.odd {
		background: #f8f8f8;
	}

	.row.head {
		height: 12.5px;
		background: #f3f3f3;
	}

	.name {
		display: flex;
		align-items: center;
		flex: none;
		gap: 2px;
		width: 133px;
		box-sizing: border-box;
		border-right: 1px solid #e4e4e4;
	}

	.head .name {
		padding-left: 3px;
	}

	.up {
		margin-left: 9px;
		border: 3px solid transparent;
		border-top: 0;
		border-bottom: 3px solid #222;
	}

	.state {
		display: flex;
		align-items: center;
		flex: none;
		width: 12px;
		padding-left: 3px;
		box-sizing: border-box;
	}

	.sign {
		width: 9px;
		padding-left: 3px;
		box-sizing: border-box;
		font-size: 7px;
		color: #666;
	}

	.child .sign {
		align-self: stretch;
		width: 5px;
		margin-left: 18px;
		padding: 0;
		border-left: 1px dashed #aaa;
	}

	.box {
		display: grid;
		place-items: center;
		width: 7px;
		height: 7px;
		border: 1px solid #222;
	}

	.child {
		gap: 1.5px;
	}

	.bold {
		font-weight: bold;
	}

	.scroll {
		display: flex;
		align-items: center;
		height: 13px;
		margin-bottom: 2px;
		padding: 0 3px;
		background: #f0f0f0;
		border-bottom: 2px solid #b5b5b5;
		font-size: 12px;
	}

	.scroll i {
		width: 67px;
		height: 10px;
		margin: 0 auto 0 5px;
		background: #cdcdcd;
	}

	.fold {
		display: flex;
		align-items: center;
		justify-content: space-between;
		height: 15px;
		padding: 0 4px 0 5px;
		border-bottom: 1px solid #a5b5b9;
		font-size: 8.4px;
		color: #1d6d83;
	}

	.scene {
		background: linear-gradient(#aeafb1, #cbccd0 35%, #dcdde1 68%, #e5e6eb);
	}

	.axis text {
		font: 9.5px 'Liberation Sans', sans-serif;
	}

	.analysis {
		display: flex;
		flex-direction: column;
		flex: 1;
		padding-top: 7px;
		background: #fff;
	}

	.set {
		padding-bottom: 5px;
		margin-bottom: 3.5px;
		border-bottom: 1px solid #ddd;
	}

	.set:last-of-type {
		border: 0;
	}

	.set div {
		display: grid;
		place-items: center;
		height: 21.6px;
	}

	.back {
		width: 0;
		margin: auto 0 4px 5px;
		border: 2px solid transparent;
		border-left: 0;
		border-right: 2.5px solid #222;
	}

	.curvebar {
		display: flex;
		align-items: center;
		flex: none;
		height: 22px;
		padding-left: 9px;
		border-bottom: 1px solid #e2e2e2;
	}

	.layer {
		width: 30px;
		margin-right: 2px;
	}

	.curvebar > .bar {
		margin: 0 4px;
	}

	.curvebar > .caret:not(.end) {
		margin: 0 12px 0 2px;
	}

	.curves {
		padding: 0;
		border: 0;
	}

	.status {
		display: grid;
		grid-template-columns: 602px 615px auto;
		align-items: center;
		flex: none;
		height: 14px;
		padding-left: 2px;
		font-size: 7.5px;
		font-weight: 600;
		letter-spacing: -0.18px;
	}

	.status div {
		display: flex;
		gap: 4px;
	}

	.taskbar {
		display: flex;
		flex: 1;
		background: #000;
		color: #eee;
	}

	.task {
		display: grid;
		place-items: center;
		width: 26.6px;
		margin: 0 3px;
		box-sizing: border-box;
		border-bottom: 2px solid transparent;
	}

	.run {
		border-color: #76b1e2;
	}

	.active.task {
		width: 30.6px;
		margin: 0 1px;
		background: #333;
	}

	.tray {
		display: flex;
		align-items: center;
		gap: 5px;
		height: 26px;
		margin-left: auto;
		padding-right: 9px;
		font-size: 8px;
	}

	.time {
		display: flex;
		flex-direction: column;
		align-items: center;
		width: 36px;
		margin-left: 4px;
		line-height: 11px;
	}
</style>
